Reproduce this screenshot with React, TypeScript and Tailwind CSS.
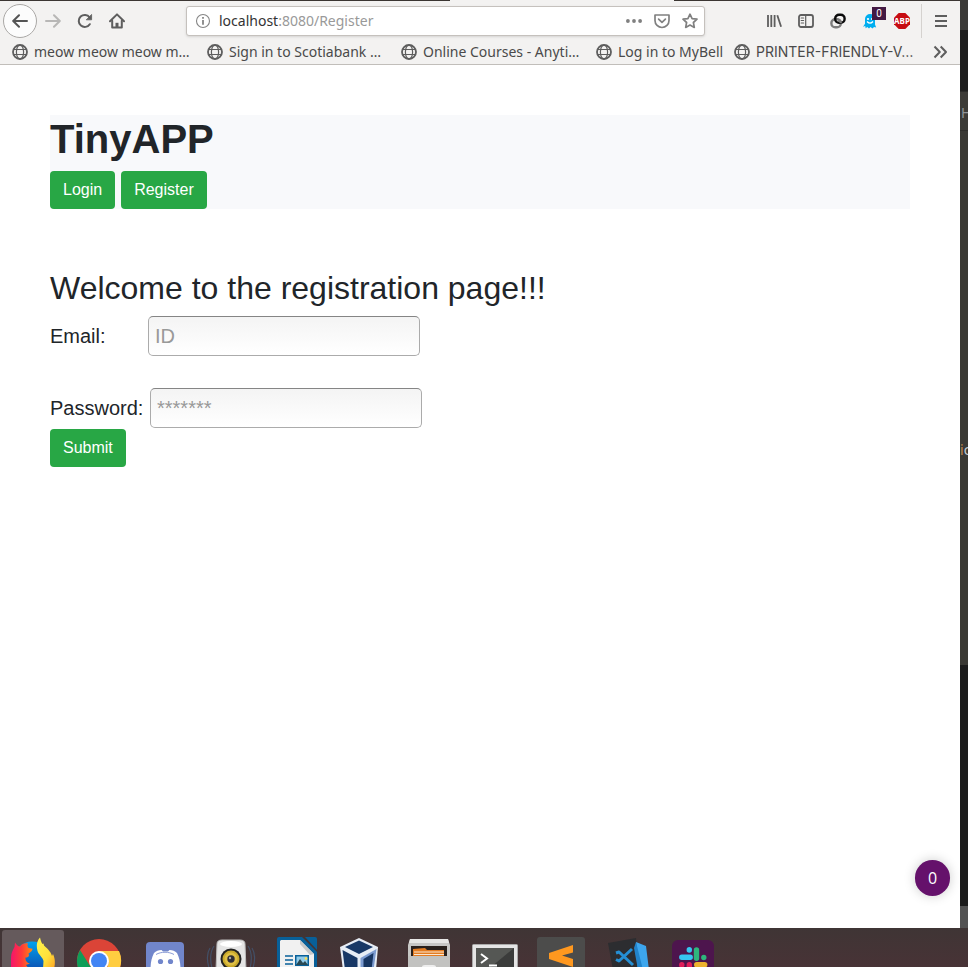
import type { ReactNode } from "react";

const uiFont = "font-['Noto_Sans','Open_Sans',sans-serif]";

function ToolButton({ label, children }: { label: string; children: ReactNode }) {
  return (
    <button type="button" aria-label={label} className="relative flex h-8 w-8 shrink-0 items-center justify-center text-[#5e5e5e]">
      {children}
    </button>
  );
}

function Stroke({ children, size = 16, width = 2 }: { children: ReactNode; size?: number; width?: number }) {
  return (
    <svg width={size} height={size} viewBox="0 0 16 16" fill="none" stroke="currentColor" strokeWidth={width} strokeLinecap="round" strokeLinejoin="round" aria-hidden="true">
      {children}
    </svg>
  );
}

function Globe() {
  return (
    <svg className="shrink-0" width="16" height="16" viewBox="0 0 16 16" fill="none" stroke="#5e5e5e" aria-hidden="true">
      <circle cx="8" cy="8" r="7" strokeWidth="1.8" />
      <ellipse cx="8" cy="8" rx="3.6" ry="7" strokeWidth="1.2" />
      <path d="M1.5 5.5h13M1.5 10.5h13" strokeWidth="1.2" />
    </svg>
  );
}

function NavigationBar() {
  return (
    <div className="flex h-[38px] items-center pl-[3px] pr-1">
      <button type="button" aria-label="Back" className="flex h-[34px] w-[34px] shrink-0 items-center justify-center rounded-full border border-[#aaa8a6] bg-[#fcfcfc] text-[#555]">
        <Stroke><path d="M15 8H1.5M7 2.2 1.2 8 7 13.8" /></Stroke>
      </button>
      <ToolButton label="Forward">
        <span className="text-[#b8b7b6]"><Stroke><path d="M1 8h13.5M9 2.2 14.8 8 9 13.8" /></Stroke></span>
      </ToolButton>
      <ToolButton label="Reload">
        <Stroke>
          <path d="M12.8 11.2A6 6 0 1 1 12.6 4.4" />
          <path d="M14.6 1.8v5H9.6z" fill="currentColor" strokeWidth="0.8" />
        </Stroke>
      </ToolButton>
      <ToolButton label="Home">
        <Stroke>
          <path d="M1 8.2 8 1.4l7 6.8" />
          <path d="M3.2 7.8v6.8h9.6V7.8" />
          <path d="M8 14V9.8" strokeWidth="3" strokeLinecap="butt" />
        </Stroke>
      </ToolButton>
      <div className="mx-[53px] flex h-[30px] min-w-0 flex-1 items-center rounded-[3px] border border-[#c5c1bd] bg-white pl-2 pr-1.5 shadow-sm">
        <svg className="mr-2 shrink-0" width="16" height="16" viewBox="0 0 16 16" fill="none" stroke="#858585" aria-hidden="true">
          <circle cx="8" cy="8" r="6.5" strokeWidth="1.1" />
          <path d="M8 7v4.8M8 4v1.8" strokeWidth="1.8" />
        </svg>
        <div className={`min-w-0 flex-1 truncate text-sm text-[#999] ${uiFont}`} role="textbox" aria-label="Address">
          <span className="text-[#333]">localhost</span>:8080/Register
        </div>
        <div className="flex gap-3 text-[#808080]">
          <button type="button" aria-label="Page actions">
            <svg width="16" height="16" viewBox="0 0 16 16" fill="currentColor" aria-hidden="true">
              <circle cx="1.9" cy="8" r="1.9" /><circle cx="8" cy="8" r="1.9" /><circle cx="14.1" cy="8" r="1.9" />
            </svg>
          </button>
          <button type="button" aria-label="Save to Pocket">
            <Stroke width={1.7}><path d="M1 2h14v5.5a7 7 0 0 1-14 0zM4.6 6.2 8 9.4l3.4-3.2" /></Stroke>
          </button>
          <button type="button" aria-label="Bookmark this page">
            <Stroke width={1.7}><path d="m8 1.2 2.1 4.4 4.9.6-3.6 3.3.9 4.9L8 12.1l-4.3 2.3.9-4.9L1 6.2l4.9-.6z" /></Stroke>
          </button>
        </div>
      </div>
      <ToolButton label="Library">
        <Stroke><path d="M2 2v12M5.3 2v12M8.6 2v12M11.3 2.2l3.8 11.6" strokeLinecap="butt" strokeWidth="1.8" /></Stroke>
      </ToolButton>
      <ToolButton label="Sidebars">
        <Stroke><rect x="1" y="2" width="14" height="12" rx="2" strokeWidth="1.8" /><path d="M7.7 2v12M3.2 5h2.4M3.2 7.5h2.4M3.2 10h2.4" strokeWidth="1.2" /></Stroke>
      </ToolButton>
      <ToolButton label="Copy link">
        <svg width="16" height="16" viewBox="0 0 16 16" fill="none" strokeWidth="2.4" aria-hidden="true">
          <rect x="1.4" y="6.2" width="9.4" height="8" rx="3.8" stroke="#7c7c7c" />
          <rect x="5.2" y="1.8" width="9.4" height="8" rx="3.8" stroke="#0b0b0b" />
          <path d="M9.4 7.2a3.8 3.8 0 0 1 1.4 3" stroke="#7c7c7c" />
        </svg>
      </ToolButton>
      <ToolButton label="Ghostery">
        <svg width="16" height="16" viewBox="0 0 16 16" aria-hidden="true">
          <path d="M3 6a5 5 0 0 1 10 0v5.5l1.2 3-2.2-.5-1.5 1.5L8.5 14 7 15.5 5.3 14l-1.6 1.3L3.2 13l-2.2.7 2-3z" fill="#00aef0" />
          <circle cx="6" cy="6" r="1.1" fill="#fff" /><circle cx="10" cy="6" r="1.1" fill="#fff" />
          <path d="M5 8.5q3 3.3 6 0" stroke="#fff" strokeWidth="1.2" fill="none" />
        </svg>
        <span className="absolute left-[18px] top-[2px] h-[13px] w-[14px] bg-[#441a43] font-['Roboto',sans-serif] text-[10px] leading-[13px] text-white">0</span>
      </ToolButton>
      <ToolButton label="Adblock Plus">
        <svg width="16" height="16" viewBox="0 0 16 16" aria-hidden="true">
          <path d="M4.7 0h6.6L16 4.7v6.6L11.3 16H4.7L0 11.3V4.7z" fill="#c70d12" />
          <text x="8" y="11" textAnchor="middle" fontFamily="Noto Sans, sans-serif" fontWeight="bold" fontSize="8" fill="#fff">ABP</text>
        </svg>
      </ToolButton>
      <div className="ml-[3px] mr-1 h-[34px] w-px bg-[#d5d2cf]" />
      <button type="button" aria-label="Open menu" className="flex h-8 w-[30px] shrink-0 items-center justify-center text-[#5e5e5e]">
        <Stroke><path d="M2 3h12M2 8h12M2 13h12" strokeLinecap="butt" /></Stroke>
      </button>
    </div>
  );
}

function Bookmark({ width, sans = uiFont, children }: { width: string; sans?: string; children: string }) {
  return (
    <a href="#" className={`flex items-center gap-1.5 whitespace-nowrap text-sm text-[#4a4a4a] ${width} ${sans}`}>
      <Globe />
      {children}
    </a>
  );
}

function BookmarksBar() {
  return (
    <nav aria-label="Bookmarks" className="flex h-6 items-center px-3">
      <Bookmark width="w-[195px]">meow meow meow m…</Bookmark>
      <Bookmark width="w-[194px]">Sign in to Scotiabank …</Bookmark>
      <Bookmark width="w-[195px]">Online Courses - Anyti…</Bookmark>
      <Bookmark width="w-[138px]">Log in to MyBell</Bookmark>
      <Bookmark width="w-[180px]" sans="font-['Inter',sans-serif]">PRINTER-FRIENDLY-V…</Bookmark>
      <button type="button" aria-label="Show more bookmarks" className="ml-auto text-[#5e5e5e]">
        <Stroke><path d="m2.5 2.5 5.3 5.5-5.3 5.5M8.7 2.5 14 8l-5.3 5.5" strokeLinecap="butt" /></Stroke>
      </button>
    </nav>
  );
}

const button = "h-[38px] rounded-[4px] bg-[#28a745] px-[13px] text-base text-white";
const field =
  "h-10 w-[272px] rounded-[5px] border border-[#ababab] border-t-[#858585] bg-linear-to-b from-[#f4f4f4] to-white px-1.5 text-xl placeholder:text-[#999] placeholder:opacity-100";

function RegistrationPage() {
  return (
    <main className="relative flex-1 bg-white p-[50px] font-['Liberation_Sans',Arial,sans-serif] text-[#212529]">
      <header className="mb-[60px] bg-[#f8f9fb]">
        <h1 className="mb-2 text-[40px] font-bold leading-[48px]">TinyAPP</h1>
        <div className="flex gap-1.5">
          <button type="button" className={button}>Login</button>
          <button type="button" className={button}>Register</button>
        </div>
      </header>
      <h2 className="mb-2 text-[32px] leading-[39px]">Welcome to the registration page!!!</h2>
      <form onSubmit={(event) => event.preventDefault()}>
        <div className="mb-8 flex items-center text-xl">
          <label htmlFor="email" className="w-[98px]">Email:</label>
          <input id="email" type="email" placeholder="ID" className={field} />
        </div>
        <div className="mb-px flex items-center text-xl">
          <label htmlFor="password" className="w-[100px]">Password:</label>
          <input id="password" type="password" placeholder="*******" className={field} />
        </div>
        <button type="submit" className={button}>Submit</button>
      </form>
      <div className="absolute bottom-8 right-2.5 flex h-9 w-[35px] items-center justify-center rounded-full bg-[#65116b] font-['Open_Sans',sans-serif] text-base text-white shadow-[0_0_12px_rgba(0,0,0,0.2)]">
        0
      </div>
    </main>
  );
}

function DesktopEdge() {
  return (
    <aside className={`flex w-2 shrink-0 flex-col overflow-hidden bg-[#1e1e1e] text-sm ${uiFont}`}>
      <div className="h-[30px] bg-[#3b3a38]" />
      <div className="h-[61px] bg-[#1e1e1e]" />
      <div className="flex h-[39px] items-center border-t border-[#2a2a28] bg-[#3c3b37] pl-px pt-1 text-[#8f9498]">H</div>
      <div className="h-[535px] whitespace-nowrap border-t border-[#2f2e2b] bg-[#3a3934] pt-[309px] leading-5 text-[#c3ccd3]">
        <span className="text-[#c08a4c]">i</span>c
      </div>
      <div className="flex-1 bg-[#1c1c1c]" />
      <div className="h-[22px] bg-[#535353]" />
    </aside>
  );
}

function DockItem({ name, active = false, children }: { name: string; active?: boolean; children: ReactNode }) {
  return (
    <button type="button" aria-label={name} className="h-[39px] w-[66px] shrink-0">
      <svg width="66" height="39" viewBox="0 0 66 39" aria-hidden="true">
        {active && <rect x="2" y="2" width="62" height="46" rx="3" fill="#655a5c" />}
        {children}
      </svg>
    </button>
  );
}

function Dock() {
  return (
    <footer className="flex h-[39px] overflow-hidden bg-linear-to-b from-[#3f3535] to-[#483336]">
      <DockItem name="Firefox" active>
        <defs>
          <linearGradient id="fox" x1="0" y1="0" x2="1" y2="0"><stop stopColor="#f5156c" /><stop offset=".5" stopColor="#ff3a3a" /><stop offset="1" stopColor="#ff8a10" /></linearGradient>
          <linearGradient id="flame" x1="0" y1="0" x2="1" y2="1"><stop stopColor="#fff44f" /><stop offset=".6" stopColor="#ffe03a" /><stop offset="1" stopColor="#ffa425" /></linearGradient>
          <linearGradient id="world" x1="0" y1="0" x2="0" y2="1"><stop stopColor="#00a2ee" /><stop offset="1" stopColor="#1038a0" /></linearGradient>
        </defs>
        <circle cx="32" cy="32" r="18.5" fill="url(#world)" />
        <path d="M11 41V30c0-5 2-8 3.500-11l.5-4.500c2 2.500 3 4 5 4 2-3 5-3.500 8-3-1 2-.5 3 .5 4.500l4 .7c0 2.500-2 3.500-4 4.800l.5 2c-.5 1.500-1.500 2-3.500 2-.5 3 1.500 5.500 4.500 6l-4 1.500 3 4z" fill="url(#fox)" />
        <path d="M40 9.500c-4 4.500-3.500 9.500-2.500 13.500 1.300 4 5 6 6 10l-.5 8h11c1.500-6 1-11-1-15l-1 2c-1.500-5-5.500-8-8-10.500l-.5-2-1 .5c-1.500-2-2-4.500-2.500-6.500z" fill="url(#flame)" />
      </DockItem>
      <DockItem name="Chrome">
        <circle cx="33" cy="33" r="22" fill="#db4437" />
        <path d="M14 22A22 22 0 0 0 30 55l5-12-11-5z" fill="#0f9d58" />
        <path d="M33 23h20a22 22 0 0 1-15 31l5-21z" fill="#ffcd40" />
        <circle cx="33" cy="33" r="10" fill="#fff" /><circle cx="33" cy="33" r="8" fill="#4285f4" />
      </DockItem>
      <DockItem name="Discord">
        <rect x="14" y="14" width="38" height="38" rx="4" fill="#7186cb" />
        <path d="M18.500 42c0-7 1-12 3.500-17 2-1.800 4.500-3 7.500-3l1.500 1.500h5l1.500-1.500c3 0 5.500 1.200 7.500 3 2.500 5 3.500 10 3.500 17z" fill="#fff" />
        <path d="M24 26.500c5-3 13-3 18 0" fill="none" stroke="#8a9bd6" strokeWidth="1" />
        <circle cx="28.500" cy="33.500" r="2.600" fill="#7186cb" /><circle cx="38.500" cy="33.500" r="2.600" fill="#7186cb" />
      </DockItem>
      <DockItem name="Rhythmbox">
        <path d="M16 18c-4 6-4 14-2 22M12 20c-4 6-3 13-1 20M50 18c4 6 4 14 2 22M54 20c4 6 3 13 1 20" fill="none" stroke="#435067" strokeWidth="1.2" />
        <path d="M19 16q0-4 5-4h18q5 0 5 4l1 26H18z" fill="#e5e5e5" stroke="#bbb" />
        <ellipse cx="33" cy="16" rx="11" ry="3" fill="#fff" />
        <circle cx="33" cy="31" r="10.500" fill="#222" /><circle cx="33" cy="31" r="8.500" fill="#c9a92c" />
        <circle cx="33" cy="31" r="6.500" fill="#e0c044" /><circle cx="33" cy="31" r="3.700" fill="#302e35" /><circle cx="32" cy="30" r="1.200" fill="#aaa" />
      </DockItem>
      <DockItem name="LibreOffice Writer">
        <path d="M15 9h23l15 15v18H13V11q0-2 2-2z" fill="#086099" />
        <path d="M17 12h19l14 14v16H16V13z" fill="#f1f1f1" /><path d="M36 12v4l10 11 4-1z" fill="#c8c8c8" />
        <path d="M41 9h10q2 0 2 2v11z" fill="#086099" />
        <path d="M21 28h8M21 32h8M21 36h8" stroke="#086099" strokeWidth="1.700" />
        <rect x="31" y="27" width="14" height="11" fill="#086099" /><rect x="32.500" y="28.500" width="11" height="8" fill="#91cbe9" />
        <path d="m32 37 4-6 3 4 2-2 3 4z" fill="#294853" /><circle cx="42" cy="30.500" r="1.300" fill="#ffe048" />
      </DockItem>
      <DockItem name="VirtualBox">
        <path d="m29 10 19 9-2 23H13l-3-23z" fill="#e7edf5" />
        <path d="m29 12.500 14 6.500-14 7-14-7z" fill="#183866" />
        <path d="m12.500 22 15 8v12H15z" fill="#183866" /><path d="m46.500 21-16 9v12h13z" fill="#7c9bd0" />
        <path d="m43.500 25-10 6v11h8z" fill="#173561" />
      </DockItem>
      <DockItem name="Files">
        <path d="M14 11h38l2 6v25H12V17z" fill="#c7c7c5" /><path d="M14 11h38l1 4H13z" fill="#e7e7e5" />
        <path d="M15 18h36v12H15z" fill="#29211d" /><path d="M17 21l12-1 2 2h17v8H17z" fill="#e37c22" />
        <path d="M18 24h30M18 26.500h30" stroke="#f9e7d4" /><path d="M12 28h42v14H12z" fill="#c2c2c0" />
        <path d="M26 42v-3q0-2 3-2h8q3 0 3 2v3z" fill="#eee" />
      </DockItem>
      <DockItem name="Terminal">
        <rect x="10.500" y="16.500" width="45" height="35" rx="1" fill="#e5e5e5" stroke="#aaa" />
        <rect x="14" y="20" width="38" height="30" fill="#3b3c3b" /><path d="M14 20h38L29 39H14z" fill="#555754" />
        <path d="m19 26 6 4.500-6 4.500M27 37.500h8" fill="none" stroke="#fff" strokeWidth="2" />
      </DockItem>
      <DockItem name="Sublime Text">
        <rect x="9" y="9" width="48" height="48" rx="3" fill="#4c4c4b" />
        <path d="m45 17-24 8v6l24 8v-8l-11-3.500 11-3z" fill="#ff981f" />
      </DockItem>
      <DockItem name="Visual Studio Code">
        <path d="m14 15 28-5 2 32H19z" fill="#2c2d30" />
        <path d="m42 14 10 4 3 24H44z" fill="#3da6ed" /><path d="m42 14-2 6 4 22h5z" fill="#2283ca" />
        <path d="m38 21-13 12-3-1.500M39 37 25 24l-3 1" fill="none" stroke="#258fd4" strokeWidth="3" strokeLinejoin="round" />
      </DockItem>
      <DockItem name="Slack">
        <rect x="12" y="12" width="42" height="42" rx="6" fill="#4d154d" />
        <g fill="none" strokeWidth="5.400" strokeLinecap="round">
          <path d="M21.800 29.300h8.400M29.300 21.800v.3" stroke="#36c5f0" /><path d="M36.500 22v8.300M43.800 29.400v.1" stroke="#2eb67d" />
          <path d="M29.300 36.700v9M21.800 36.700v.3" stroke="#e01e5a" /><path d="M36.700 36.700h8" stroke="#ecb22e" />
        </g>
      </DockItem>
    </footer>
  );
}

export default function App() {
  return (
    <div className="flex min-h-screen flex-col overflow-hidden">
      <div className="flex flex-1">
        <div className="flex min-w-0 flex-1 flex-col">
          <div className="border-b border-[#c1beba] bg-[#f3f2f1]">
            <div className="flex h-px justify-between">
              <div className="w-[450px] bg-[#3b3633]" />
              <div className="w-[286px] bg-[#3b3633]" />
            </div>
            <div className="pt-px">
              <NavigationBar />
            </div>
            <BookmarksBar />
          </div>
          <RegistrationPage />
        </div>
        <DesktopEdge />
      </div>
      <Dock />
    </div>
  );
}
